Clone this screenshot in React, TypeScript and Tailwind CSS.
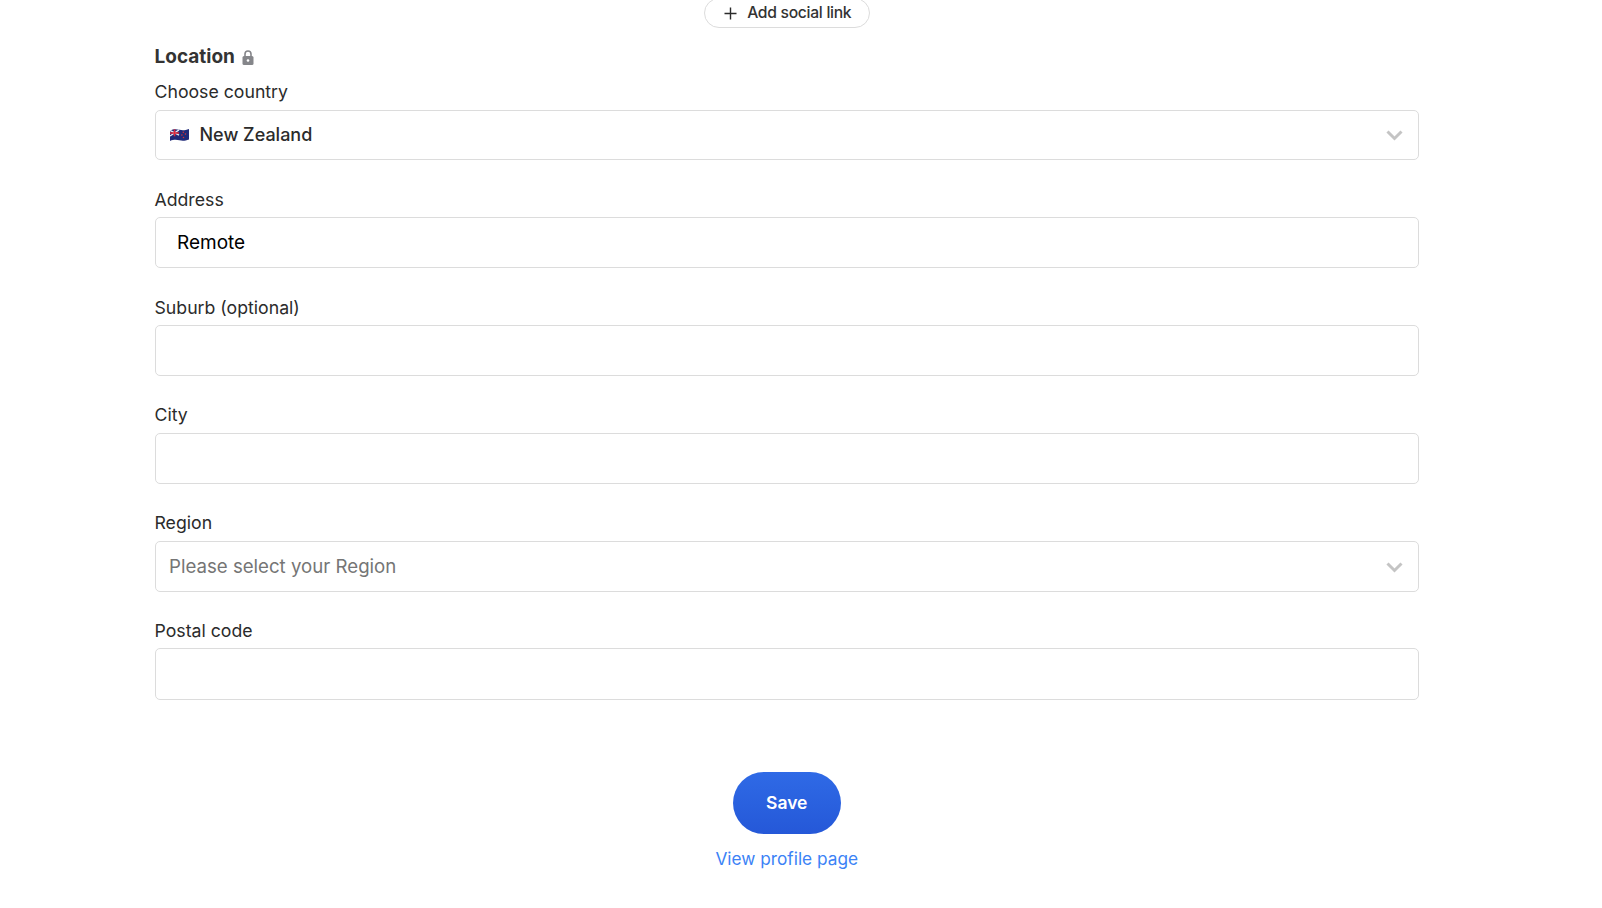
import React from "react";

function Chevron() {
  return (
    <svg width="17" height="11" viewBox="0 0 17 11" fill="none" className="ml-auto">
      <path d="M1.5 1.5 L8.5 8.5 L15.5 1.5" stroke="#c4c4c4" strokeWidth="3" />
    </svg>
  );
}

function Flag() {
  return (
    <svg width="19" height="14" viewBox="0 0 20 14">
      <path d="M0 2.2 C4 0.4 7 0.8 10 1.6 C13 2.4 16 2.2 20 0.8 V11.8 C16 13.2 13 13.4 10 12.6 C7 11.8 4 11.6 0 13.2 Z" fill="#1f2a78" />
      <path d="M0 2.2 L9.5 7.2 M9.5 1.6 L0 8" stroke="#e5e7f0" strokeWidth="1.4" />
      <path d="M4.8 1 V8.4 M0 5 H9.6" stroke="#dc2a3a" strokeWidth="1.6" />
      <circle cx="14" cy="4" r="0.8" fill="#d33" />
      <circle cx="16.3" cy="6" r="0.8" fill="#d33" />
      <circle cx="12.5" cy="7" r="0.8" fill="#d33" />
      <circle cx="14.2" cy="9.6" r="0.8" fill="#d33" />
    </svg>
  );
}

function Field({
  label,
  children,
  className = "",
  labelClass = "mb-[5px]",
}: {
  label: string;
  children?: React.ReactNode;
  className?: string;
  labelClass?: string;
}) {
  return (
    <div className={`flex flex-col ${className}`}>
      <label className={`text-[17.7px] leading-[27px] text-[#2b2b2b] ${labelClass}`}>{label}</label>
      {children ?? <div className="h-[51px] rounded-[5px] border border-[#dcdcdc] bg-white" />}
    </div>
  );
}

export default function App() {
  return (
    <div className="h-[908px] overflow-hidden bg-white font-['Inter',sans-serif]">
      <div className="ml-[154.5px] w-[1264.5px] flex flex-col">
        <div className="flex justify-center -mt-[2px]">
          <button className="flex h-[30px] w-[166px] items-center justify-center gap-[10px] rounded-full border border-[#dcdcdc] bg-white pl-[2px] text-[15.7px] font-medium tracking-[-0.3px] text-[#333333]">
            <svg width="13" height="13" viewBox="0 0 13 13" fill="none">
              <path d="M6.5 0.5 V12.5 M0.5 6.5 H12.5" stroke="#2b2b2b" strokeWidth="1.4" />
            </svg>
            Add social link
          </button>
        </div>

        <div className="mt-[15px] flex items-center gap-[7px] text-[19px] leading-[28px] font-bold text-[#333333]">
          Location
          <svg width="12" height="15" viewBox="0 0 12 15" className="mt-[1px]">
            <path d="M3 6.5 V4 a3 3 0 0 1 6 0 V6.5" fill="none" stroke="#85868a" strokeWidth="1.6" />
            <rect x="0.5" y="6" width="11" height="9" rx="1.5" fill="#85868a" />
            <circle cx="6" cy="10.5" r="1.3" fill="#fff" />
          </svg>
        </div>

        <Field label="Choose country" className="mt-[7px]">
          <div className="flex h-[50px] items-center rounded-[5px] border border-[#dcdcdc] bg-white pl-[14px] pr-[15px]">
            <Flag />
            <span className="ml-[11px] -mt-[1px] text-[18px] font-medium text-[#2b2b2b]">New Zealand</span>
            <Chevron />
          </div>
        </Field>

        <Field label="Address" className="mt-[25px]" labelClass="pt-[1px] mb-[4px]">
          <div className="flex h-[51px] items-center rounded-[5px] border border-[#dcdcdc] bg-white pl-[21.5px] pt-[1px] text-[19px] text-black">
            Remote
          </div>
        </Field>

        <Field label="Suburb (optional)" className="mt-[25px]" labelClass="pt-[1px] mb-[4px]" />
        <Field label="City" className="mt-[25px]" />

        <Field label="Region" className="mt-[25px]">
          <div className="flex h-[51px] items-center rounded-[5px] border border-[#dcdcdc] bg-white pl-[13.5px] pr-[15px] pt-[1px] text-[18.65px] text-[#757575]">
            Please select your Region
            <Chevron />
          </div>
        </Field>

        <Field label="Postal code" className="mt-[25px]" labelClass="mb-[4px]">
          <div className="h-[52px] rounded-[5px] border border-[#dcdcdc] bg-white" />
        </Field>

        <div className="mt-[72px] flex flex-col items-center">
          <button className="flex h-[62px] w-[108px] items-center justify-center rounded-full bg-gradient-to-b from-[#2f6ae6] to-[#2558d8] text-[17.5px] font-semibold text-white">
            Save
          </button>
          <a className="mt-[11px] text-[17.25px] leading-[27px] text-[#3b82f6]">View profile page</a>
        </div>
      </div>
    </div>
  );
}
